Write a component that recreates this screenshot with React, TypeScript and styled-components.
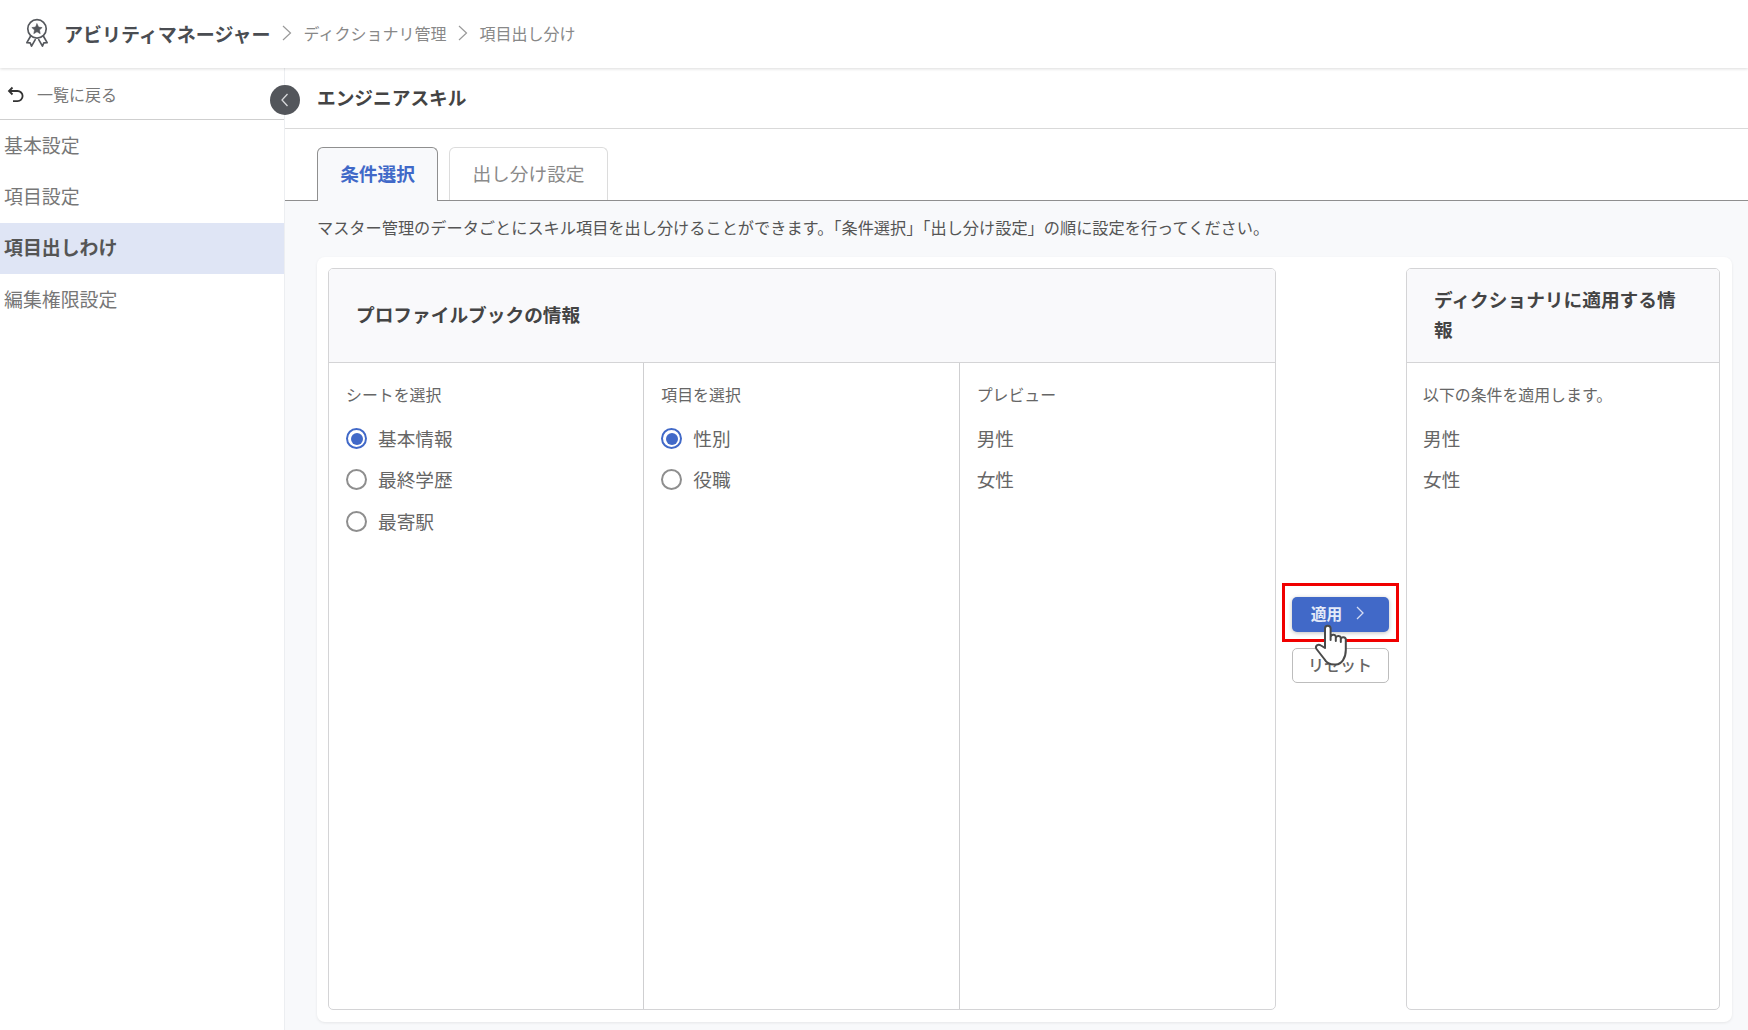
import React from "react";
import styled, { createGlobalStyle } from "styled-components";

const Global = createGlobalStyle`
  html, body { margin: 0; padding: 0; height: 100%; background: #fff; overflow: hidden; }
  #root { height: 100%; }
  * { box-sizing: border-box; }
  body { font-family: "Noto Sans CJK JP", "Noto Sans", sans-serif; color: #555; }
`;

const Page = styled.div`
  display: flex;
  flex-direction: column;
  width: 1748px;
  height: 1030px;
  overflow: hidden;
  position: relative;
`;

const Header = styled.header`
  display: flex;
  align-items: center;
  height: 68px;
  flex: none;
  padding: 0 0 2px 25px;
  background: #fff;
  box-shadow: 0 1px 3px rgba(0, 0, 0, 0.14);
  position: relative;
  z-index: 2;
`;

const AppTitle = styled.span`
  font-size: 19px;
  font-weight: 700;
  color: #4a4d52;
  margin-left: 15px;
  white-space: nowrap;
`;

const Crumb = styled.span`
  font-size: 16px;
  color: #888;
  white-space: nowrap;
`;

const Chevron = styled.svg`
  width: 12px;
  height: 18px;
  margin: 0 10.5px;
  flex: none;
`;

const Body = styled.div`
  display: flex;
  flex: 1;
  min-height: 0;
  position: relative;
`;

const Sidebar = styled.aside`
  width: 285px;
  flex: none;
  background: #fff;
  border-right: 1px solid #eceef1;
`;

const BackRow = styled.div`
  display: flex;
  align-items: center;
  height: 52px;
  padding: 0 0 0 7px;
  border-bottom: 1px solid #cfcfcf;
  font-size: 16px;
  color: #777;
  gap: 12px;
  svg {
    margin-top: 2px;
  }
`;

const NavItem = styled.div<{ $active?: boolean }>`
  display: flex;
  align-items: center;
  height: 51.3px;
  padding: 0 0 3px 4px;
  font-size: 18.9px;
  font-weight: ${(p) => (p.$active ? 700 : 400)};
  color: ${(p) => (p.$active ? "#555" : "#777")};
  background: ${(p) => (p.$active ? "#dfe5f5" : "transparent")};
`;

const Toggle = styled.div`
  position: absolute;
  left: 269.5px;
  top: 17px;
  width: 30px;
  height: 30px;
  border-radius: 50%;
  background: #53565b;
  display: flex;
  align-items: center;
  justify-content: center;
  z-index: 3;
`;

const Main = styled.main`
  flex: 1;
  min-width: 0;
  display: flex;
  flex-direction: column;
  background: #f8f9fb;
`;

const TitleBar = styled.div`
  display: flex;
  align-items: center;
  height: 61px;
  flex: none;
  padding: 0 0 3px 32px;
  background: #fff;
  border-bottom: 1px solid #d9d9d9;
  font-size: 18.7px;
  font-weight: 700;
  color: #444;
`;

const Tabs = styled.div`
  display: flex;
  align-items: flex-end;
  gap: 11px;
  height: 72px;
  flex: none;
  padding-left: 32px;
  background: #fff;
  border-bottom: 1px solid #8f8f8f;
`;

const Tab = styled.div<{ $active?: boolean }>`
  display: flex;
  align-items: center;
  justify-content: center;
  width: ${(p) => (p.$active ? "121px" : "159px")};
  height: ${(p) => (p.$active ? "54px" : "53px")};
  margin-bottom: ${(p) => (p.$active ? "-1px" : "0")};
  padding-bottom: 4px;
  border: 1px solid ${(p) => (p.$active ? "#8f8f8f" : "#dcdcdc")};
  border-bottom: ${(p) => (p.$active ? "none" : "0")};
  border-radius: 6px 6px 0 0;
  background: ${(p) => (p.$active ? "#f8f9fb" : "#fff")};
  font-size: 18.7px;
  font-weight: ${(p) => (p.$active ? 700 : 400)};
  color: ${(p) => (p.$active ? "#4169c8" : "#8a8a8a")};
`;

const Description = styled.p`
  margin: 0;
  height: 56px;
  flex: none;
  padding: 14px 0 0 32px;
  font-size: 16.2px;
  line-height: 24px;
  color: #555;
  white-space: nowrap;
`;

const Card = styled.section`
  display: flex;
  height: 765px;
  margin: 0 16px 0 32px;
  padding: 11px 12px 12px 11px;
  background: #fff;
  border-radius: 8px;
  box-shadow: 0 1px 3px rgba(0, 0, 0, 0.08);
`;

const Panel = styled.div<{ $width: string }>`
  display: flex;
  flex-direction: column;
  width: ${(p) => p.$width};
  flex: none;
  border: 1px solid #d4d4d6;
  border-radius: 5px;
  overflow: hidden;
`;

const PanelHeader = styled.h2<{ $pad: string }>`
  display: flex;
  align-items: center;
  height: 94px;
  flex: none;
  margin: 0;
  padding: 0 ${(p) => p.$pad} 3px 27px;
  background: #f9f9fb;
  border-bottom: 1px solid #d4d4d6;
  font-size: 18.7px;
  line-height: 30px;
  font-weight: 700;
  color: #444;
`;

const Columns = styled.div`
  display: grid;
  grid-template-columns: repeat(3, 1fr);
  flex: 1;
`;

const Column = styled.div<{ $last?: boolean }>`
  padding: 20px 0 0 17px;
  border-right: ${(p) => (p.$last ? "none" : "1px solid #cfcfd1")};
`;

const Single = styled.div`
  flex: 1;
  padding: 20px 0 0 16px;
`;

const Label = styled.div`
  font-size: 15.9px;
  line-height: 24px;
  height: 34px;
  color: #666;
`;

const Row = styled.div<{ $tall?: boolean }>`
  display: flex;
  align-items: center;
  gap: 11px;
  height: ${(p) => (p.$tall ? "42px" : "41px")};
  font-size: 18.7px;
  color: #666;
`;

const Radio = styled.span<{ $on?: boolean }>`
  width: 21px;
  height: 21px;
  flex: none;
  margin-top: 2px;
  border-radius: 50%;
  border: 2px solid ${(p) => (p.$on ? "#4169c8" : "#8e8e8e")};
  background: #fff;
  position: relative;
  &::after {
    content: "";
    display: ${(p) => (p.$on ? "block" : "none")};
    position: absolute;
    inset: 2.5px;
    border-radius: 50%;
    background: #4169c8;
  }
`;

const Middle = styled.div`
  width: 130px;
  flex: none;
  display: flex;
  flex-direction: column;
  align-items: center;
  justify-content: center;
  gap: 16px;
  padding: 1px 2px 0 0;
`;

const ApplyWrap = styled.div`
  position: relative;
`;

const BaseButton = styled.button`
  display: flex;
  align-items: center;
  justify-content: center;
  width: 97px;
  height: 35px;
  border-radius: 5px;
  font-family: inherit;
  padding: 0 0 2px;
`;

const ApplyButton = styled(BaseButton)`
  gap: 13px;
  font-size: 15.7px;
  font-weight: 700;
  background: #4169c8;
  color: #e4eaf8;
  border: none;
  padding-right: 4px;
  box-shadow: 0 1px 4px rgba(0, 0, 0, 0.25);
`;

const ResetButton = styled(BaseButton)`
  font-size: 16px;
  font-weight: 500;
  background: #fff;
  color: #666;
  border: 1px solid #bdbdbd;
`;

const RedFrame = styled.div`
  position: absolute;
  left: -10px;
  top: -14px;
  width: 117px;
  height: 59px;
  border: 3px solid #f00000;
  pointer-events: none;
`;

const HandCursor = styled.svg`
  position: absolute;
  left: 22px;
  top: 27px;
  width: 34px;
  height: 42px;
  z-index: 4;
  pointer-events: none;
`;

const Medal = () => (
  <svg width="24" height="30" viewBox="0 0 26 32" fill="none" stroke="#55585d" strokeWidth="1.8" strokeLinejoin="round" strokeLinecap="round">
    <circle cx="13" cy="11.5" r="10" />
    <path d="M13 6l1.700 3.600 3.900.5-2.900 2.700.8 3.900-3.500-2-3.500 2 .8-3.900-2.900-2.700 3.900-.5z" fill="#55585d" strokeWidth="0.6" />
    <path d="M6 19.500l-4 7 3.600.2 1.500 3.500 4-7" />
    <path d="M20 19.500l4 7-3.600.2-1.500 3.500-4-7" />
  </svg>
);

const Sep = () => (
  <Chevron viewBox="0 0 12 18" fill="none" stroke="#999" strokeWidth="1.2">
    <path d="M2 2l7.500 7L2 16" />
  </Chevron>
);

const BackIcon = () => (
  <svg width="18" height="18" viewBox="0 0 18 18" fill="none" stroke="#333" strokeWidth="1.8">
    <path d="M5.500 1.500L2 5l3.500 3.500" />
    <path d="M2.400 5h8.100a5 5 0 0 1 0 10.200H6" />
  </svg>
);

export default function App() {
  return (
    <Page>
      <Global />
      <Header>
        <Medal />
        <AppTitle>アビリティマネージャー</AppTitle>
        <Sep />
        <Crumb>ディクショナリ管理</Crumb>
        <Sep />
        <Crumb>項目出し分け</Crumb>
      </Header>
      <Body>
        <Sidebar>
          <BackRow>
            <BackIcon />
            <span>一覧に戻る</span>
          </BackRow>
          <NavItem>基本設定</NavItem>
          <NavItem>項目設定</NavItem>
          <NavItem $active>項目出しわけ</NavItem>
          <NavItem>編集権限設定</NavItem>
        </Sidebar>
        <Toggle>
          <svg width="12" height="16" viewBox="0 0 12 16" fill="none" stroke="#d8d9db" strokeWidth="1.3">
            <path d="M8.500 2L3 8l5.500 6" />
          </svg>
        </Toggle>
        <Main>
          <TitleBar>エンジニアスキル</TitleBar>
          <Tabs>
            <Tab $active>条件選択</Tab>
            <Tab>出し分け設定</Tab>
          </Tabs>
          <Description>
            マスター管理のデータごとにスキル項目を出し分けることができます。「条件選択」「出し分け設定」の順に設定を行ってください。
          </Description>
          <Card>
            <Panel $width="948px">
              <PanelHeader $pad="28px">プロファイルブックの情報</PanelHeader>
              <Columns>
                <Column>
                  <Label>シートを選択</Label>
                  <Row><Radio $on />基本情報</Row>
                  <Row><Radio />最終学歴</Row>
                  <Row $tall><Radio />最寄駅</Row>
                </Column>
                <Column>
                  <Label>項目を選択</Label>
                  <Row><Radio $on />性別</Row>
                  <Row><Radio />役職</Row>
                </Column>
                <Column $last>
                  <Label>プレビュー</Label>
                  <Row>男性</Row>
                  <Row>女性</Row>
                </Column>
              </Columns>
            </Panel>
            <Middle>
              <ApplyWrap>
                <ApplyButton>
                  適用
                  <svg width="10" height="14" viewBox="0 0 10 14" fill="none" stroke="#d5dcf3" strokeWidth="1.3">
                    <path d="M2 1l6 6-6 6" />
                  </svg>
                </ApplyButton>
                <RedFrame />
                <HandCursor viewBox="0 0 34 42" fill="#fff" stroke="#4a4a4a" strokeWidth="2" strokeLinejoin="round" strokeLinecap="round">
                  <path d="M11 24V4.500a2.800 2.800 0 0 1 5.600 0V16v-3a2.700 2.700 0 0 1 5.200-.5V17v-3a2.600 2.600 0 0 1 5-.4V18v-2.500a2.500 2.500 0 0 1 5 .4V26c0 8-4 14-10 14.500-6 .5-9-1-11.500-5.500L2.500 25c-1.800-3 1.500-5.500 4.500-3.500z" />
                </HandCursor>
              </ApplyWrap>
              <ResetButton>リセット</ResetButton>
            </Middle>
            <Panel $width="314px">
              <PanelHeader $pad="30px">ディクショナリに適用する情報</PanelHeader>
              <Single>
                <Label>以下の条件を適用します。</Label>
                <Row>男性</Row>
                <Row>女性</Row>
              </Single>
            </Panel>
          </Card>
        </Main>
      </Body>
    </Page>
  );
}
